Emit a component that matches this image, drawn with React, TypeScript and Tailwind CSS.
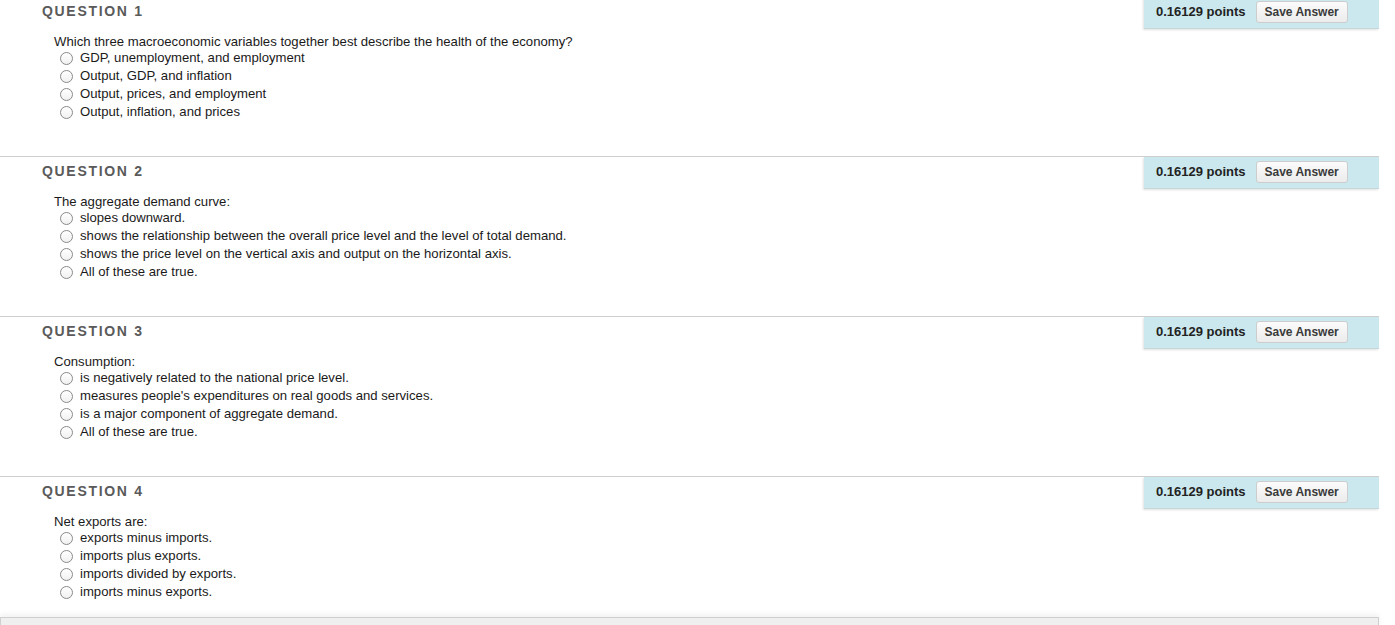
import React from 'react';

interface Question {
  num: number;
  text: string;
  options: string[];
}

const questions: Question[] = [
  {
    num: 1,
    text: 'Which three macroeconomic variables together best describe the health of the economy?',
    options: [
      'GDP, unemployment, and employment',
      'Output, GDP, and inflation',
      'Output, prices, and employment',
      'Output, inflation, and prices',
    ],
  },
  {
    num: 2,
    text: 'The aggregate demand curve:',
    options: [
      'slopes downward.',
      'shows the relationship between the overall price level and the level of total demand.',
      'shows the price level on the vertical axis and output on the horizontal axis.',
      'All of these are true.',
    ],
  },
  {
    num: 3,
    text: 'Consumption:',
    options: [
      'is negatively related to the national price level.',
      "measures people's expenditures on real goods and services.",
      'is a major component of aggregate demand.',
      'All of these are true.',
    ],
  },
  {
    num: 4,
    text: 'Net exports are:',
    options: [
      'exports minus imports.',
      'imports plus exports.',
      'imports divided by exports.',
      'imports minus exports.',
    ],
  },
];

function QuestionBlock({ q, last }: { q: Question; last?: boolean }) {
  return (
    <div className={last ? 'h-[141px] border-t border-[#cfcfcf]' : 'h-[160px] border-t border-[#cfcfcf]'}>
      {/* Header: label + points box */}
      <div className="flex h-[32px] items-stretch justify-between">
        <div className="flex items-center pb-[4px] pl-[42px] text-[14px] font-bold tracking-[0.12em] text-[#5a5a5a]">
          QUESTION {q.num}
        </div>
        <div className="flex w-[235px] items-center border-b border-[#c4d6da] bg-[#cbe8ee] pb-[2px] pl-[12px] shadow-[-1px_1px_2px_rgba(0,0,0,0.12)]">
          <span className="text-[13px] font-bold text-[#222]">0.16129 points</span>
          <button className="ml-[10px] h-[22px] w-[92px] rounded-[3px] border border-[#cdcdcd] bg-gradient-to-b from-[#fbfbfb] to-[#ececec] text-[12px] font-bold text-[#3a3a3a]">
            Save Answer
          </button>
        </div>
      </div>

      {/* Question body */}
      <div className="mt-[4px] pl-[54px] text-[13.15px] leading-[18px] text-[#1a1a1a]">
        <div className="h-[16px]">{q.text}</div>
        {q.options.map((o) => (
          <label key={o} className="flex items-center">
            <span className="ml-[6px] mr-[7px] h-[13px] w-[13px] rounded-full border border-[#8a8a8a] bg-gradient-to-b from-white to-[#f1f1f1]" />
            <span>{o}</span>
          </label>
        ))}
      </div>
    </div>
  );
}

export default function App() {
  return (
    <div className="h-[625px] w-[1395px] overflow-hidden bg-white font-['Liberation_Sans',Arial,sans-serif]">
      <div className="-mt-[4px] w-[1379px]">
        {questions.map((q, i) => (
          <QuestionBlock key={q.num} q={q} last={i === questions.length - 1} />
        ))}
        {/* Submit bar at the bottom */}
        <div className="h-[40px] border border-[#cfcfcf] bg-[#efefef] shadow-[0_-3px_5px_rgba(0,0,0,0.05)]" />
      </div>
    </div>
  );
}
